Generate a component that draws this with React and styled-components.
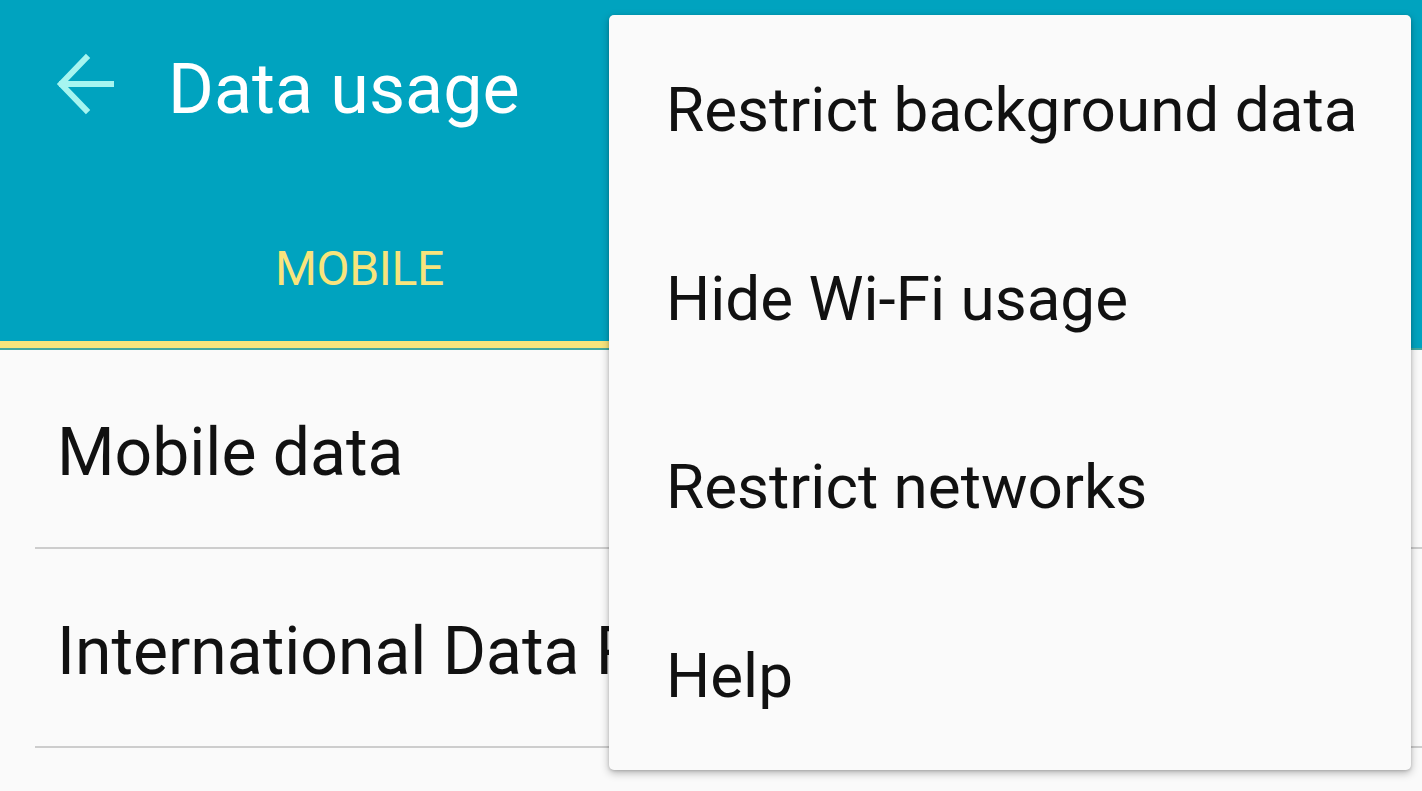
import styled, { createGlobalStyle } from "styled-components";

const GlobalStyle = createGlobalStyle`
    html, body {
        margin: 0;
        padding: 0;
        background: #fafafa;
        font-family: Roboto, "Noto Sans", sans-serif;
        overflow: hidden;
    }
`;

const Screen = styled.div`
    position: relative;
    width: 1422px;
    height: 791px;
    background: #fafafa;
    overflow: hidden;
`;

const Header = styled.header`
    background: #00a3bf;
    display: flex;
    flex-direction: column;
`;

const Toolbar = styled.div`
    height: 172px;
    display: flex;
    align-items: flex-start;
    padding: 52px 0 0 56px;
    box-sizing: border-box;
`;

const BackButton = styled.button`
    border: 0;
    background: none;
    padding: 0;
    width: 60px;
    height: 64px;
    display: flex;
    align-items: center;
    justify-content: center;
    margin-right: 52px;
`;

const Title = styled.h1`
    margin: 0;
    font-size: 70px;
    font-weight: 400;
    color: #ffffff;
    line-height: 74px;
`;

const Tabs = styled.div`
    display: flex;
    border-bottom: 2px solid #45a8a0;
`;

const Tab = styled.div`
    flex: 1;
    height: 176px;
    display: flex;
    align-items: center;
    justify-content: center;
    padding: 24px 0 0 8px;
    box-sizing: border-box;
    font-size: 48px;
    font-weight: 400;
    letter-spacing: -0.3px;
    color: ${(p) => (p.$active ? "#f8e47c" : "rgba(255,255,255,0.7)")};
    border-bottom: 7px solid ${(p) => (p.$active ? "#f8e47c" : "transparent")};
`;

const List = styled.div`
    display: flex;
    flex-direction: column;
`;

const Row = styled.div`
    height: 197px;
    display: flex;
    align-items: center;
    padding-left: 57px;
    padding-top: 8px;
    box-sizing: border-box;
    font-size: 66px;
    color: #111111;
    white-space: nowrap;
`;

const Divider = styled.div`
    height: 2px;
    margin-left: 35px;
    background: #cdcdcd;
`;

const Menu = styled.div`
    position: absolute;
    left: 609px;
    top: 15px;
    width: 802px;
    height: 755px;
    background: #fafafa;
    border-radius: 5px;
    box-shadow: 0 3px 8px rgba(0, 0, 0, 0.28), 0 1px 3px rgba(0, 0, 0, 0.15);
    display: flex;
    flex-direction: column;
`;

const MenuItem = styled.div`
    flex: 1;
    display: flex;
    align-items: center;
    padding-left: 57px;
    font-size: 62px;
    color: #111111;
    white-space: nowrap;
`;

const BackArrow = () => (
    <svg width="60" height="64" viewBox="0 0 60 64" fill="none">
        <path
            d="M55 32 H6 M30 6 L5 32 L30 58"
            stroke="#a6f5f0"
            strokeWidth="6"
            strokeLinecap="square"
        />
    </svg>
);

const App = () => {
    const menuItems = [
        "Restrict background data",
        "Hide Wi-Fi usage",
        "Restrict networks",
        "Help",
    ];

    return (
        <>
            <GlobalStyle />
            <Screen>
                <Header>
                    <Toolbar>
                        <BackButton>
                            <BackArrow />
                        </BackButton>
                        <Title>Data usage</Title>
                    </Toolbar>
                    <Tabs>
                        <Tab $active>MOBILE</Tab>
                        <Tab />
                    </Tabs>
                </Header>
                <List>
                    <Row>Mobile data</Row>
                    <Divider />
                    <Row>International Data Roaming</Row>
                    <Divider />
                </List>
                <Menu>
                    {menuItems.map((item) => (
                        <MenuItem key={item}>{item}</MenuItem>
                    ))}
                </Menu>
            </Screen>
        </>
    );
};

export default App;
